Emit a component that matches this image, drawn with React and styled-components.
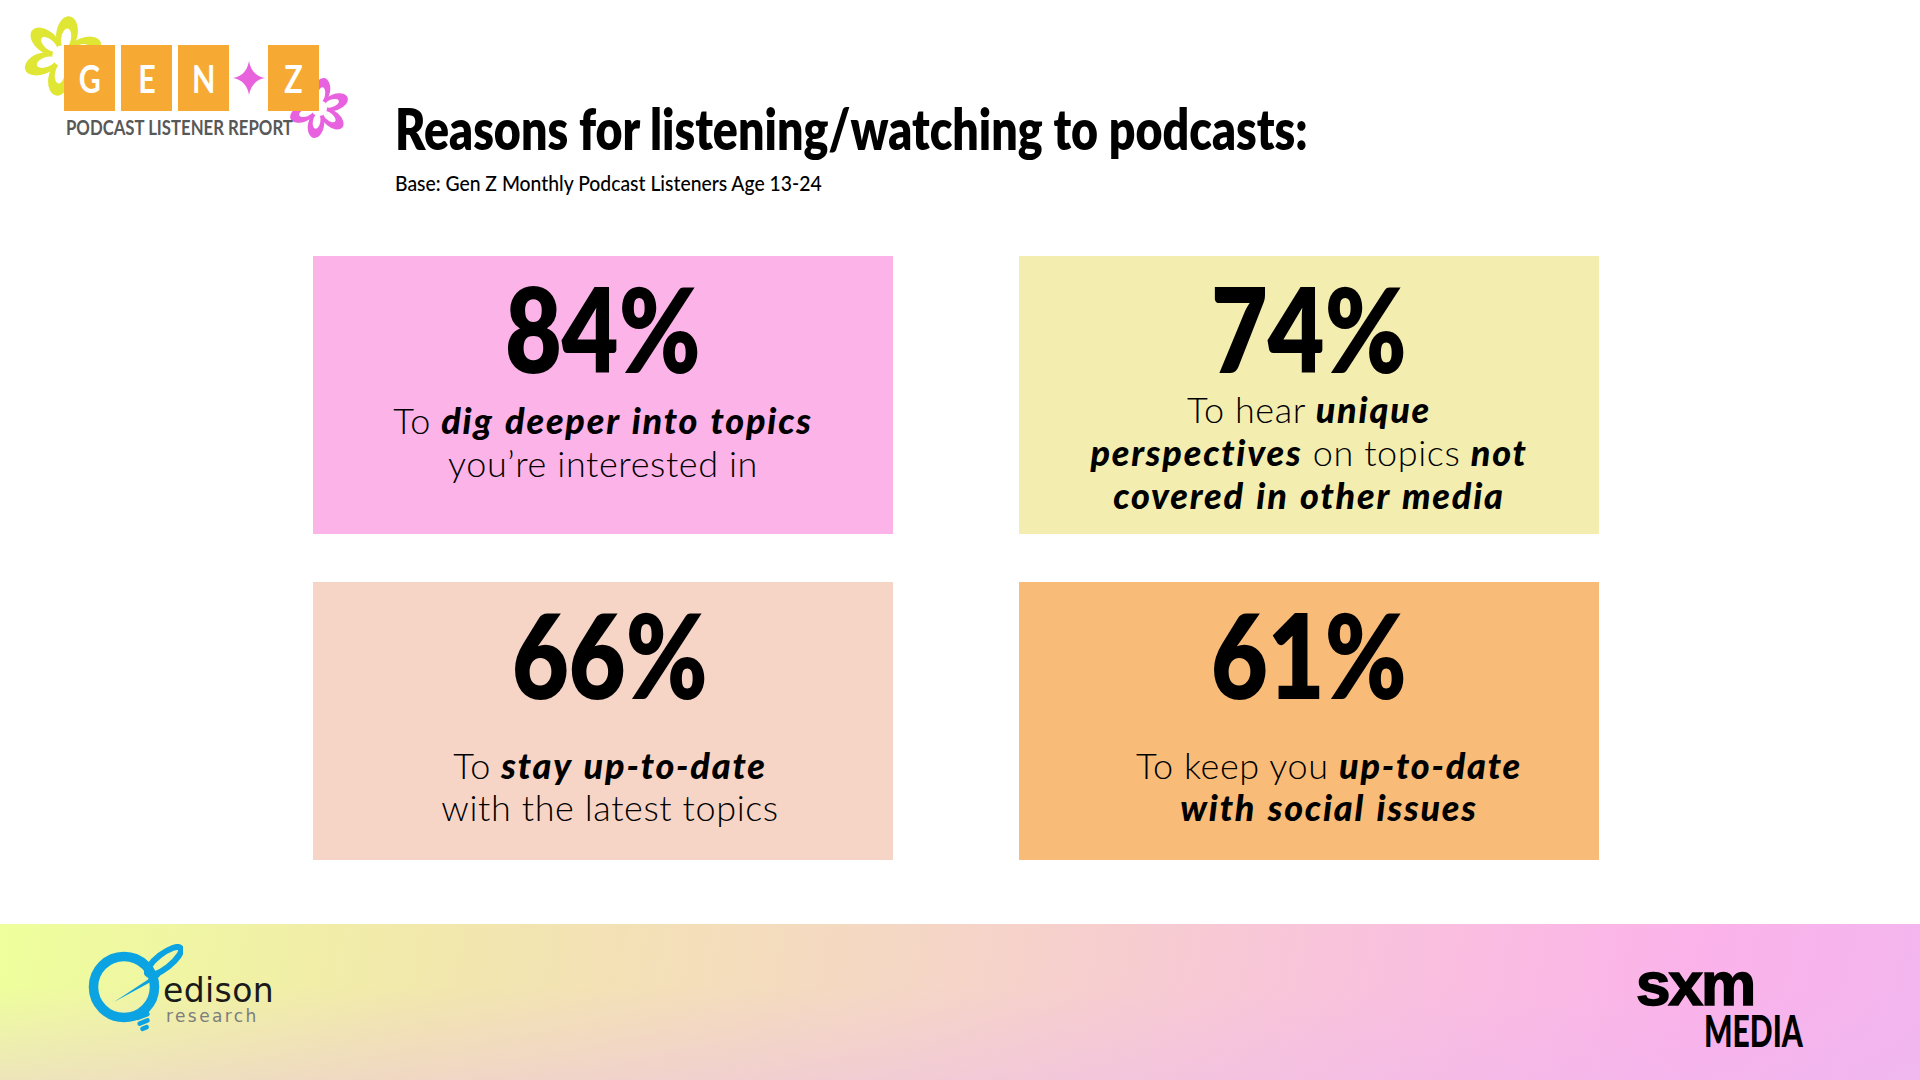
import React, { useLayoutEffect, useRef, useState } from 'react';
import styled, { createGlobalStyle } from 'styled-components';

const GlobalStyle = createGlobalStyle`
  html, body {
    margin: 0;
    padding: 0;
    background: #ffffff;
  }
  body {
    font-family: 'Lato', 'Liberation Sans', sans-serif;
    color: #000;
  }
`;

const Page = styled.div`
  width: 1920px;
  height: 1080px;
  display: flex;
  flex-direction: column;
  overflow: hidden;
  background: #fff;
`;

const Header = styled.header`
  height: 256px;
  display: flex;
  align-items: flex-start;
  flex-shrink: 0;
`;

const LogoBlock = styled.div`
  position: relative;
  margin: 45px 0 0 64px;
  width: 256px;
`;

const Flower = styled.svg`
  position: absolute;
  left: ${({ $left }) => $left}px;
  top: ${({ $top }) => $top}px;
  width: ${({ $size }) => $size}px;
  height: ${({ $size }) => $size}px;
  z-index: 0;
`;

const LetterRow = styled.div`
  position: relative;
  z-index: 1;
  display: flex;
  gap: 6px;
  height: 66px;
`;

const LetterBox = styled.div`
  width: 51px;
  height: 66px;
  background: #f6aa33;
  color: #fff;
  display: flex;
  align-items: center;
  justify-content: center;
  font-family: 'Lato', sans-serif;
  font-weight: 700;
  font-size: 38px;

  span {
    display: inline-block;
    transform: scaleX(0.8);
  }
`;

const SparkleSlot = styled.div`
  width: 27px;
  display: flex;
  align-items: center;
  justify-content: center;
  overflow: visible;
`;

const Tagline = styled.div`
  position: relative;
  z-index: 1;
  margin-top: 5px;
  margin-left: 2px;
  font-family: 'Lato', sans-serif;
  font-weight: 700;
  font-size: 20px;
  line-height: 22px;
  color: #585858;
`;

const TitleBlock = styled.div`
  margin-left: 75px;
  padding-top: 98px;
`;

const Title = styled.h1`
  margin: 0;
  font-family: 'Lato', sans-serif;
  font-weight: 800;
  font-size: 56px;
  line-height: 62px;
`;

const Subtitle = styled.p`
  margin: 10px 0 0 0;
  font-family: 'Lato', sans-serif;
  font-weight: 500;
  font-size: 22px;
  line-height: 26px;
`;

const FitBox = styled.span`
  display: inline-block;
  white-space: nowrap;
  transform-origin: ${({ $origin }) => $origin || 'left center'};
`;

const CardGrid = styled.section`
  display: grid;
  grid-template-columns: 580px 580px;
  grid-auto-rows: 278px;
  column-gap: 126px;
  row-gap: 48px;
  padding-left: 313px;
`;

const Card = styled.div`
  background: ${({ $bg }) => $bg};
  display: flex;
  flex-direction: column;
  align-items: center;
  padding-top: 20px;
  padding-left: ${({ $shift }) => $shift || 0}px;
  box-sizing: border-box;
  text-align: center;
`;

const Percent = styled.div`
  font-family: 'Lato', sans-serif;
  font-weight: 800;
  font-size: 118px;
  line-height: 104px;
`;

const Reason = styled.p`
  margin: ${({ $gap }) => $gap}px 0 0 0;
  padding-left: ${({ $indent }) => $indent || 0}px;
  font-family: 'Lato', sans-serif;
  font-weight: 300;
  font-size: 36px;
  line-height: ${({ $lh }) => $lh || 43}px;
  letter-spacing: 0.6px;
  white-space: nowrap;

  em {
    font-style: italic;
    font-weight: 900;
    letter-spacing: 1.8px;
    word-spacing: 2px;
  }
`;

const Footer = styled.footer`
  margin-top: auto;
  height: 156px;
  flex-shrink: 0;
  display: flex;
  align-items: center;
  justify-content: space-between;
  padding: 0 117px 0 88px;
  box-sizing: border-box;
  background:
    linear-gradient(180deg, rgba(255, 255, 255, 0) 40%, rgba(236, 184, 240, 0.35) 100%),
    linear-gradient(100deg, #eeff9c 0%, #f2e8ac 22%, #f5d6c6 48%, #f9c2dc 70%, #fbb2ea 88%, #f3b6ee 100%);
`;

const Edison = styled.div`
  display: flex;
  align-items: flex-start;
  margin-bottom: 22px;
`;

const EdisonMark = styled.svg`
  width: 95px;
  height: 95px;
  flex-shrink: 0;
`;

const EdisonText = styled.div`
  margin-left: -20px;
  margin-top: 30px;
  display: flex;
  flex-direction: column;
`;

const EdisonName = styled.span`
  font-family: 'DejaVu Sans', sans-serif;
  font-size: 33px;
  line-height: 33px;
  letter-spacing: 0.4px;
  color: #1a1a1a;
`;

const EdisonSub = styled.span`
  margin-left: 3px;
  font-family: 'DejaVu Sans', sans-serif;
  font-size: 17px;
  line-height: 18px;
  letter-spacing: 2.4px;
  color: #7d7d7d;
`;

const Sxm = styled.div`
  width: 167px;
  display: flex;
  flex-direction: column;
  align-items: flex-start;
  margin-top: 8px;
`;

const SxmWord = styled.span`
  font-family: 'Liberation Sans', 'Arial', sans-serif;
  font-weight: 700;
  font-size: 62px;
  line-height: 44px;
  letter-spacing: -2px;
  -webkit-text-stroke: 1.6px #000;
`;

const MediaWord = styled.span`
  margin-left: 68px;
  margin-top: 4px;
  font-family: 'Lato', sans-serif;
  font-weight: 900;
  font-size: 44px;
  line-height: 40px;
`;

// squeezes a one-line text to the width it has in the slide
function Fit({ width, origin, children }) {
  const ref = useRef(null);
  const [scale, setScale] = useState(1);

  useLayoutEffect(() => {
    const measure = () => {
      if (!ref.current) return;
      const w = ref.current.offsetWidth;
      if (w) setScale(width / w);
    };
    measure();
    if (document.fonts && document.fonts.ready) document.fonts.ready.then(measure);
  }, [width]);

  return (
    <FitBox ref={ref} $origin={origin} style={{ transform: `scaleX(${scale})` }}>
      {children}
    </FitBox>
  );
}

function FlowerIcon({ color, left, top, size }) {
  const petals = [0, 60, 120, 180, 240, 300];
  return (
    <Flower $left={left} $top={top} $size={size} viewBox="-50 -50 100 100">
      {petals.map((a) => (
        <ellipse key={a} cx="0" cy="-28" rx="13" ry="21" fill={color} transform={`rotate(${a + 10})`} />
      ))}
      <circle r="22" fill={color} />
      {petals.map((a) => (
        <ellipse key={`w${a}`} cx="0" cy="-22" rx="6" ry="12" fill="#fff" transform={`rotate(${a + 10})`} />
      ))}
      <circle r="13" fill="#fff" />
    </Flower>
  );
}

function Sparkle() {
  return (
    <svg width="32" height="34" viewBox="-16 -17 32 34" style={{ flexShrink: 0 }}>
      <path d="M0 -17 Q2.5 -2.5 16 0 Q2.5 2.5 0 17 Q-2.5 2.5 -16 0 Q-2.5 -2.5 0 -17 Z" fill="#e862dc" />
    </svg>
  );
}

function GenZLogo() {
  return (
    <LogoBlock>
      <FlowerIcon color="#dfe634" left={-42} top={-30} size={82} />
      <FlowerIcon color="#e862e0" left={224} top={32} size={62} />
      <LetterRow>
        <LetterBox><span>G</span></LetterBox>
        <LetterBox><span>E</span></LetterBox>
        <LetterBox><span>N</span></LetterBox>
        <SparkleSlot><Sparkle /></SparkleSlot>
        <LetterBox><span>Z</span></LetterBox>
      </LetterRow>
      <Tagline>
        <Fit width={227}>PODCAST LISTENER REPORT</Fit>
      </Tagline>
    </LogoBlock>
  );
}

function EdisonLogo() {
  return (
    <Edison>
      <EdisonMark viewBox="0 0 95 95">
        <circle cx="36" cy="43" r="30.5" fill="none" stroke="#0ba3e2" strokeWidth="9.5" />
        <ellipse cx="76" cy="17" rx="21" ry="7" fill="none" stroke="#0ba3e2" strokeWidth="6" transform="rotate(-38 76 17)" />
        <path d="M82 21 L70 34 L26 58 Z" fill="#0ba3e2" />
        <g fill="#0ba3e2">
          <rect x="47" y="70" width="15" height="4.5" rx="2.2" transform="rotate(-22 54 72)" />
          <rect x="49" y="76" width="13" height="4.5" rx="2.2" transform="rotate(-22 55 78)" />
          <rect x="52" y="82" width="9" height="4.5" rx="2.2" transform="rotate(-22 56 84)" />
        </g>
      </EdisonMark>
      <EdisonText>
        <EdisonName>edison</EdisonName>
        <EdisonSub>research</EdisonSub>
      </EdisonText>
    </Edison>
  );
}

const cards = [
  {
    bg: '#fbb3e8',
    value: '84%',
    gap: 19,
    body: (
      <>
        To <em>dig deeper into topics</em>
        <br />
        you’re interested in
      </>
    ),
  },
  {
    bg: '#f3eeb0',
    value: '74%',
    gap: 8,
    body: (
      <>
        To hear <em>unique</em>
        <br />
        <em>perspectives</em> on topics <em>not</em>
        <br />
        <em>covered in other media</em>
      </>
    ),
  },
  {
    bg: '#f7d5c6',
    value: '66%',
    gap: 38,
    shift: 14,
    lh: 42,
    body: (
      <>
        To <em>stay up-to-date</em>
        <br />
        with the latest topics
      </>
    ),
  },
  {
    bg: '#f8bc78',
    value: '61%',
    gap: 38,
    lh: 42,
    indent: 40,
    body: (
      <>
        To keep you <em>up-to-date</em>
        <br />
        <em>with social issues</em>
      </>
    ),
  },
];

export default function App() {
  return (
    <Page>
      <GlobalStyle />
      <Header>
        <GenZLogo />
        <TitleBlock>
          <Title>
            <Fit width={913}>Reasons for listening/watching to podcasts:</Fit>
          </Title>
          <Subtitle>
            <Fit width={427}>Base: Gen Z Monthly Podcast Listeners Age 13-24</Fit>
          </Subtitle>
        </TitleBlock>
      </Header>
      <CardGrid>
        {cards.map((c) => (
          <Card key={c.value} $bg={c.bg} $shift={c.shift}>
            <Percent>
              <Fit width={196} origin="center center">{c.value}</Fit>
            </Percent>
            <Reason $gap={c.gap} $lh={c.lh} $indent={c.indent}>
              {c.body}
            </Reason>
          </Card>
        ))}
      </CardGrid>
      <Footer>
        <EdisonLogo />
        <Sxm>
          <SxmWord>sxm</SxmWord>
          <MediaWord>
            <Fit width={99}>MEDIA</Fit>
          </MediaWord>
        </Sxm>
      </Footer>
    </Page>
  );
}
